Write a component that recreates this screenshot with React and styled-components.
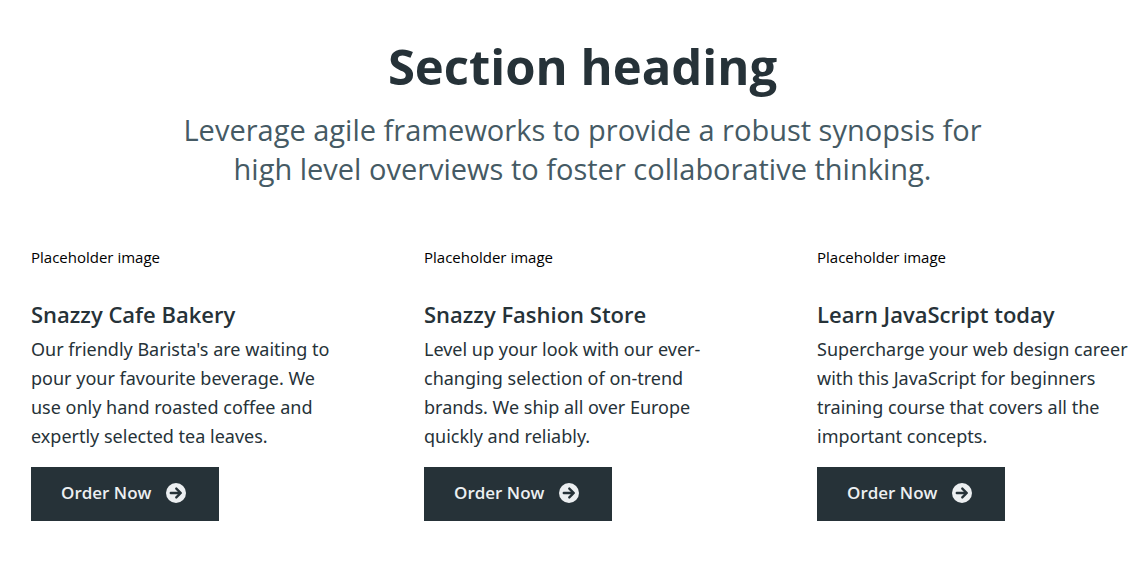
import React from "react";
import styled, { createGlobalStyle } from "styled-components";

const GlobalStyle = createGlobalStyle`
  *, *::before, *::after { box-sizing: border-box; }
  body {
    margin: 0;
    background: #ffffff;
    font-family: "Segoe UI", "Open Sans", "Noto Sans", sans-serif;
    color: #000000;
  }
`;

const Section = styled.section`
  padding: 36px 0 40px 31px;
`;

const Header = styled.header`
  max-width: 840px;
  margin: 0 auto 56px;
  text-align: center;
  padding-right: 10px;
`;

const Title = styled.h2`
  margin: 0 0 14px;
  font-size: 49px;
  line-height: 60px;
  font-weight: 700;
  color: #263238;
`;

const Lead = styled.p`
  margin: 0;
  font-size: 29px;
  line-height: 39px;
  color: #455a64;
`;

const Grid = styled.div`
  display: grid;
  grid-template-columns: repeat(3, minmax(0, 1fr));
  column-gap: 66px;
`;

const Placeholder = styled.div`
  margin-bottom: 29px;
  font-size: 15px;
  line-height: 26px;
`;

const CardTitle = styled.h3`
  margin: 0 0 6px;
  font-size: 22px;
  line-height: 30px;
  font-weight: 600;
  color: #263238;
`;

const CardText = styled.p`
  margin: 0 0 16px;
  padding-right: 12px;
  font-family: "Segoe UI", "Noto Sans", "Open Sans", sans-serif;
  font-size: 18px;
  line-height: 29px;
  color: #263238;
`;

const OrderButton = styled.button`
  display: inline-flex;
  align-items: center;
  gap: 15px;
  padding: 14px 33px 16px 30px;
  border: 0;
  background: #263238;
  color: #eceff1;
  font-family: inherit;
  font-size: 17px;
  line-height: 24px;
  font-weight: 600;
`;

const cards = [
  {
    title: "Snazzy Cafe Bakery",
    text: "Our friendly Barista's are waiting to pour your favourite beverage. We use only hand roasted coffee and expertly selected tea leaves.",
  },
  {
    title: "Snazzy Fashion Store",
    text: "Level up your look with our ever-changing selection of on-trend brands. We ship all over Europe quickly and reliably.",
  },
  {
    title: "Learn JavaScript today",
    text: "Supercharge your web design career with this JavaScript for beginners training course that covers all the important concepts.",
  },
];

function ArrowIcon() {
  return (
    <svg width="20" height="20" viewBox="0 0 20 20" aria-hidden="true">
      <circle cx="10" cy="10" r="10" fill="#eceff1" />
      <path
        d="M4.8 10H14.6M10.3 5.6L14.8 10L10.3 14.4"
        fill="none"
        stroke="#263238"
        strokeWidth="2.4"
        strokeLinecap="round"
        strokeLinejoin="round"
      />
    </svg>
  );
}

export default function App() {
  return (
    <>
      <GlobalStyle />
      <Section>
        <Header>
          <Title>Section heading</Title>
          <Lead>
            Leverage agile frameworks to provide a robust synopsis for high level
            overviews to foster collaborative thinking.
          </Lead>
        </Header>
        <Grid>
          {cards.map((card) => (
            <article key={card.title}>
              <Placeholder>Placeholder image</Placeholder>
              <CardTitle>{card.title}</CardTitle>
              <CardText>{card.text}</CardText>
              <OrderButton type="button">
                Order Now
                <ArrowIcon />
              </OrderButton>
            </article>
          ))}
        </Grid>
      </Section>
    </>
  );
}
